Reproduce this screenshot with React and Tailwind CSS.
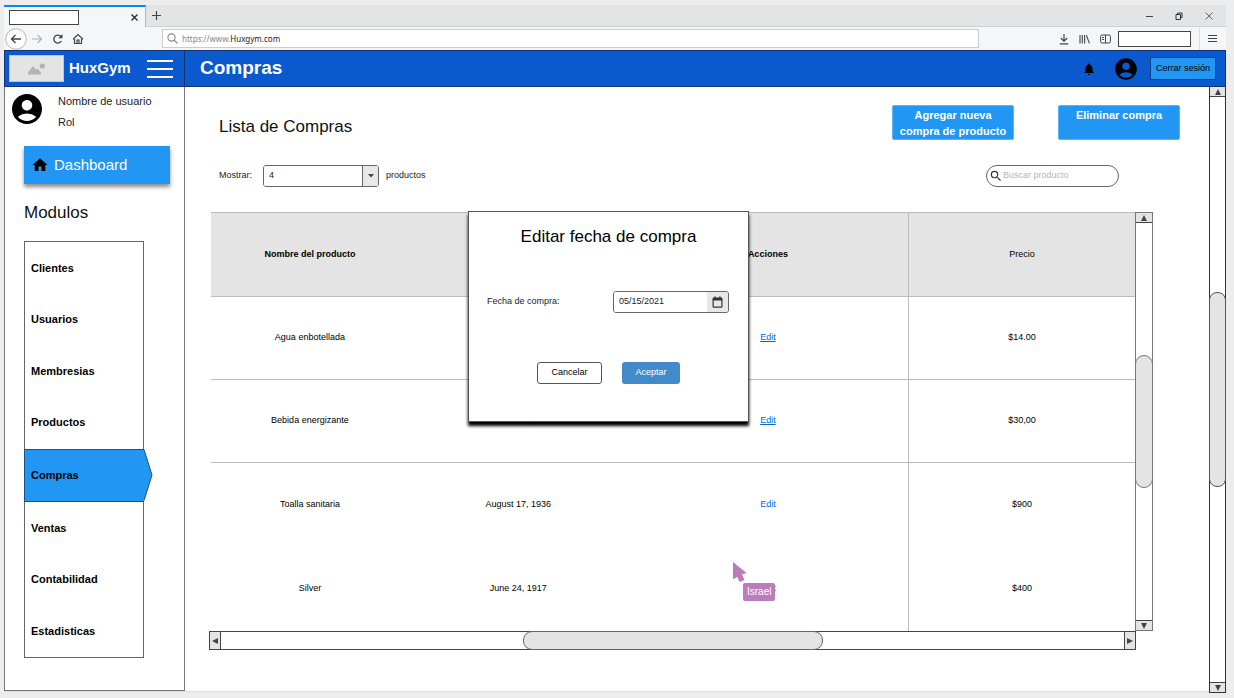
import React from "react";
import { MdAccountCircle, MdNotifications, MdHome, MdSearch } from "react-icons/md";

const modules = ["Clientes", "Usuarios", "Membresias", "Productos", "Compras", "Ventas", "Contabilidad", "Estadisticas"];

const rows = [
  { name: "Agua enbotellada", date: "March 1, 1941", price: "$14.00", line: true, underline: true },
  { name: "Bebida energizante", date: "December 5, 1935", price: "$30,00", line: true, underline: true },
  { name: "Toalla sanitaria", date: "August 17, 1936", price: "$900", line: false, underline: false },
  { name: "Silver", date: "June 24, 1917", price: "$400", line: false, underline: false },
];

function Triangle({ d }) {
  return (
    <svg width="8" height="8" viewBox="0 0 8 8" fill="#444" aria-hidden="true">
      <path d={d} />
    </svg>
  );
}

const UP = "M4 1 L7 7 H1 Z";
const DOWN = "M1 1 H7 L4 7 Z";
const LEFT = "M1 4 L7 1 V7 Z";
const RIGHT = "M1 1 L7 4 L1 7 Z";

function ScrollButton({ label, d, className }) {
  return (
    <button type="button" aria-label={label} className={"flex shrink-0 items-center justify-center border-[#444] bg-[#e4e4e4] " + className}>
      <Triangle d={d} />
    </button>
  );
}

function BrowserChrome() {
  return (
    <div className="shrink-0">
      <div className="flex h-[22px] bg-[#e3e4e6]">
        <div className="flex w-[142px] items-center border-t-2 border-r border-t-[#0a84ff] border-r-[#b5b5b5] bg-[#f5f6f7] pr-1.5 pl-[5px]">
          <input aria-label="Título de la pestaña" className="h-[15px] w-[70px] border border-[#444] bg-white" />
          <button type="button" aria-label="Cerrar pestaña" className="ml-auto">
            <svg width="9" height="9" viewBox="0 0 9 9" stroke="#222" strokeWidth="1.2"><path d="M1.5 1.5 L7.5 7.5 M7.5 1.5 L1.5 7.5" /></svg>
          </button>
        </div>
        <div className="flex flex-1 items-center border-b border-[#d0d0d0]">
          <button type="button" aria-label="Nueva pestaña" className="ml-1.5">
            <svg width="9" height="9" viewBox="0 0 9 9" stroke="#444" strokeWidth="1.2"><path d="M4.5 0 V9 M0 4.5 H9" /></svg>
          </button>
          <div className="ml-auto flex items-center gap-[22px] pr-[13px]">
            <button type="button" aria-label="Minimizar"><svg width="7" height="8" viewBox="0 0 7 8" stroke="#444"><path d="M0 4.5 H7" /></svg></button>
            <button type="button" aria-label="Restaurar"><svg width="8" height="8" viewBox="0 0 8 8" fill="none" stroke="#333"><path d="M1 2.5 H5.5 V7.5 H1 Z M2.5 2.5 V1 H7 V5.5 H5.5" /></svg></button>
            <button type="button" aria-label="Cerrar"><svg width="8" height="8" viewBox="0 0 8 8" stroke="#555" strokeWidth=".9"><path d="M.5 .5 L7.5 7.5 M7.5 .5 L.5 7.5" /></svg></button>
          </div>
        </div>
      </div>
      <div className="flex h-[23px] items-center bg-[#f5f6f7]">
        <button type="button" aria-label="Atrás" className="ml-px">
          <svg width="22" height="22" viewBox="0 0 22 22" fill="none">
            <circle cx="11" cy="11" r="10.3" fill="#fdfdfd" stroke="#b8b8b8" />
            <path d="M16 11 H6.5 M10.5 7 L6.5 11 L10.5 15" stroke="#444" strokeWidth="1.3" />
          </svg>
        </button>
        <button type="button" aria-label="Adelante" className="ml-1">
          <svg width="12" height="10" viewBox="0 0 12 10" fill="none" stroke="#b0b0b0" strokeWidth="1.2"><path d="M1 5 H10.5 M6.5 1 L10.5 5 L6.5 9" /></svg>
        </button>
        <button type="button" aria-label="Recargar" className="ml-[9px]">
          <svg width="12" height="12" viewBox="0 0 12 12" fill="none" stroke="#444" strokeWidth="1.3"><path d="M9.3 8 A4 4 0 1 1 9 3.6" /><path d="M10.5 1 V5.2 H6.3 Z" fill="#444" stroke="none" /></svg>
        </button>
        <button type="button" aria-label="Inicio" className="ml-2">
          <svg width="12" height="12" viewBox="0 0 12 12" fill="none" stroke="#444" strokeWidth="1.2"><path d="M1 6.3 L6 1.5 L11 6.3 M2.5 6 V10.5 H9.5 V6 M5 10.5 V7 H7 V10.5" /></svg>
        </button>
        <div className="ml-[78px] flex h-[19px] min-w-0 flex-1 items-center gap-1 border border-[#ccc] bg-white pl-1">
          <svg width="11" height="11" viewBox="0 0 11 11" fill="none" stroke="#888" strokeWidth="1.1"><circle cx="4.5" cy="4.5" r="3.6" /><path d="M7.2 7.2 L10.5 10.5" /></svg>
          <span className="font-['Noto_Sans',sans-serif] text-[8px] text-[#888]">https://www.<span className="text-[#222]">Huxgym.com</span></span>
        </div>
        <div className="ml-20 flex items-center">
          <button type="button" aria-label="Descargas"><svg width="10" height="12" viewBox="0 0 10 12" fill="none" stroke="#444" strokeWidth="1.2"><path d="M5 1 V8 M1.8 5 L5 8.2 L8.2 5 M.8 10.8 H9.2" /></svg></button>
          <button type="button" aria-label="Biblioteca" className="ml-2.5"><svg width="11" height="10" viewBox="0 0 11 10" fill="none" stroke="#555" strokeWidth="1.2"><path d="M1 1 V9.5 M3.3 1 V9.5 M5.6 1 V9.5 M7.4 1.2 L10.4 9.4" /></svg></button>
          <button type="button" aria-label="Barra lateral" className="ml-2.5"><svg width="11" height="10" viewBox="0 0 11 10" fill="none" stroke="#444"><rect x=".6" y="1" width="9.8" height="8" rx="1.5" /><path d="M5.5 1 V9 M2 3.5 H4 M2 5.5 H4" /></svg></button>
          <input aria-label="Búsqueda rápida" className="ml-[7px] h-4 w-[73px] border border-[#444] bg-white" />
          <span className="ml-2 h-[22px] w-px bg-[#ddd]" />
          <button type="button" aria-label="Menú del navegador" className="mr-[9px] ml-2"><svg width="9" height="9" viewBox="0 0 9 9" stroke="#444"><path d="M0 1.5 H9 M0 4.5 H9 M0 7.5 H9" /></svg></button>
        </div>
      </div>
    </div>
  );
}

function Header() {
  return (
    <header className="flex h-[37px] shrink-0 border border-[#15346f] bg-[#0b59cf] text-white">
      <div className="flex w-[180px] shrink-0 items-center border-r border-[#15346f] pl-1">
        <div className="flex h-[27px] w-[55px] items-center justify-center border border-[#b9c7e0] bg-[#e4e4e4]">
          <svg width="18" height="12" viewBox="0 0 18 12" fill="#b3b3b3" aria-hidden="true"><path d="M0 11.5 V9.5 L5 3 L8 6.5 L9.5 5.5 L13 9.5 V11.5 Z" /><circle cx="14.3" cy="3" r="2.6" /></svg>
        </div>
        <span className="ml-[5px] text-[15px] font-bold">HuxGym</span>
        <button type="button" aria-label="Menú" className="ml-4">
          <svg width="26" height="20" viewBox="0 0 26 20" stroke="#fff" strokeWidth="2"><path d="M0 2 H26 M0 10 H26 M0 18 H26" /></svg>
        </button>
      </div>
      <h1 className="pt-[7px] pl-[15px] text-[19px] leading-5 font-bold">Compras</h1>
      <div className="ml-auto flex items-center pr-[9px]">
        <button type="button" aria-label="Notificaciones" className="text-black"><MdNotifications size={14} /></button>
        <button type="button" aria-label="Cuenta" className="ml-[17px] text-black"><MdAccountCircle size={26} /></button>
        <button type="button" className="ml-[11px] h-[23px] w-[66px] border border-[#123f80] bg-[#2196f3] text-[9px] whitespace-nowrap text-black">Cerrar sesión</button>
      </div>
    </header>
  );
}

function Sidebar() {
  return (
    <aside className="w-[181px] shrink-0 border-x border-b border-[#777] bg-white">
      <div className="flex pt-1 pl-1">
        <MdAccountCircle size={36} className="shrink-0" />
        <div className="ml-[13px] text-[11px] leading-[21px] text-[#222]">
          <p>Nombre de usuario</p>
          <p>Rol</p>
        </div>
      </div>
      <a href="#dashboard" className="mt-[13px] mr-3.5 ml-[19px] flex h-[38px] items-center bg-[#2196f3] pl-[7px] text-[15px] text-white shadow-[0_3px_4px_rgba(0,0,0,0.45)]">
        <MdHome size={18} className="text-black" />
        <span className="ml-[5px]">Dashboard</span>
      </a>
      <h2 className="mt-[17px] ml-[19px] text-[17px] leading-6 text-[#111]">Modulos</h2>
      <nav className="mt-4 mr-10 ml-[19px] flex h-[417px] flex-col border border-[#666]">
        {modules.map((m) =>
          m === "Compras" ? (
            <a key={m} href="#compras" aria-current="page" className="relative -mx-px flex flex-1 items-center border border-r-0 border-[#1c5280] bg-[#2196f3] pl-1.5 text-[11px] font-bold text-black">
              {m}
              <svg className="absolute -top-px left-full" width="9" height="52" viewBox="0 0 9 52" aria-hidden="true">
                <path d="M0 .5 L8 26 L0 51.5" fill="#2196f3" stroke="#1c5280" />
              </svg>
            </a>
          ) : (
            <a key={m} href={"#" + m.toLowerCase()} className="flex flex-1 items-center pl-1.5 text-[11px] font-bold text-black">{m}</a>
          )
        )}
      </nav>
    </aside>
  );
}

function EditDialog() {
  return (
    <div role="dialog" aria-labelledby="dialog-title" className="absolute -top-px left-[257px] w-[281px] border border-[#555] bg-white px-[18px] pt-[13px] pb-[37px] shadow-[0_4px_3px_#000]">
      <h2 id="dialog-title" className="text-center text-[17px] leading-6 text-black">Editar fecha de compra</h2>
      <div className="mt-[42px] flex items-center justify-between pr-px">
        <label htmlFor="fecha" className="text-[9px] text-[#222]">Fecha de compra:</label>
        <div className="flex h-[22px] w-[116px] overflow-hidden rounded-[3px] border border-[#666]">
          <input id="fecha" defaultValue="05/15/2021" className="min-w-0 flex-1 bg-white pl-[5px] text-[9px] text-[#222]" />
          <button type="button" aria-label="Abrir calendario" className="flex w-[21px] items-center justify-center bg-[#e8e8e8]">
            <svg width="11" height="12" viewBox="0 0 11 12" aria-hidden="true">
              <rect x="1.1" y="2" width="8.8" height="9.2" rx=".8" fill="none" stroke="#333" strokeWidth="1.2" />
              <path d="M1 2 H10 V4.6 H1 Z M2.4 .4 H3.8 V2.4 H2.4 Z M7.2 .4 H8.6 V2.4 H7.2 Z" fill="#333" />
            </svg>
          </button>
        </div>
      </div>
      <div className="mt-[49px] flex justify-center gap-5">
        <button type="button" className="h-[22px] w-[65px] rounded-[3px] border border-[#555] bg-white text-[9px] text-black">Cancelar</button>
        <button type="button" className="h-[22px] w-[58px] rounded-[3px] bg-[#428bca] text-[9px] text-white">Aceptar</button>
      </div>
    </div>
  );
}

function PurchasesTable() {
  return (
    <div className="relative flex">
      <table className="min-w-0 flex-1 table-fixed border-separate border-spacing-0 text-center text-[9px] text-black">
        <colgroup>
          <col className="w-[198px]" />
          <col className="w-[219px]" />
          <col className="w-[282px]" />
          <col className="w-[226px]" />
        </colgroup>
        <thead>
          <tr className="h-[85px] bg-[#e4e4e4]">
            <th className="border-y border-[#bbb] font-bold">Nombre del producto</th>
            <th className="border-y border-[#bbb] font-bold">Fecha</th>
            <th className="border-y border-r border-[#bbb] font-bold">Acciones</th>
            <th className="border-y border-[#bbb] font-normal">Precio</th>
          </tr>
        </thead>
        <tbody>
          {rows.map((r) => (
            <tr key={r.name} className={r.line ? "h-[83px] *:border-b *:border-[#bbb]" : "h-[84px]"}>
              <td>{r.name}</td>
              <td>{r.date}</td>
              <td className="border-r border-[#bbb]"><a href="#edit" className={r.underline ? "text-[#0069d9] underline" : "text-[#0069d9]"}>Edit</a></td>
              <td>{r.price}</td>
            </tr>
          ))}
        </tbody>
      </table>
      <div className="flex w-[18px] shrink-0 flex-col border border-[#777]">
        <ScrollButton label="Subir tabla" d={UP} className="h-2.5 border-b" />
        <div className="flex flex-1 flex-col pt-[132px]">
          <div className="-mx-px h-[133px] rounded-[9px] border border-[#777] bg-[#e4e4e4]" />
        </div>
        <ScrollButton label="Bajar tabla" d={DOWN} className="h-2.5 border-t" />
      </div>
      <EditDialog />
      <div className="absolute top-[349px] left-[521px]">
        <svg width="16" height="22" viewBox="0 0 16 22" fill="#bb7cbb" aria-hidden="true"><path d="M1 1 L14.5 12 L10 13.5 L12.5 19 L7.5 21 L5.5 16 L1 18 Z" /></svg>
        <span className="ml-[11px] block rounded-xs bg-[#bb7cbb] px-1 text-[10px] leading-[18px] text-white">Israel</span>
      </div>
    </div>
  );
}

export default function App() {
  return (
    <div className="flex min-h-screen flex-col bg-[#ededed] pt-[5px] pr-2 pb-1.5 pl-1 font-['Liberation_Sans',Arial,sans-serif]">
      <BrowserChrome />
      <Header />
      <div className="flex flex-1">
        <div className="flex min-w-0 flex-1 border-b border-[#ddd] bg-white">
          <Sidebar />
          <main className="min-w-0 flex-1 pt-[18px] pr-[56px] pl-[26px]">
            <div className="flex items-start pl-2">
              <h2 className="mt-2.5 text-[17px] leading-6 text-[#111]">Lista de Compras</h2>
              <div className="-mr-[27px] ml-auto flex gap-[44px]">
                <button type="button" className="h-[35px] w-[122px] rounded-xs border border-[#5fb2f5] bg-[#2196f3] px-1 text-[11px] leading-4 font-bold text-white">Agregar nueva compra de producto</button>
                <button type="button" className="h-[35px] w-[122px] rounded-xs border border-[#5fb2f5] bg-[#2196f3] pb-4 text-[11px] leading-4 font-bold text-white">Eliminar compra</button>
              </div>
            </div>
            <div className="mt-[25px] flex items-center pr-[34px] pl-2 text-[9px] text-[#222]">
              <label htmlFor="mostrar">Mostrar:</label>
              <div className="relative ml-[11px] flex h-[22px] w-[116px] overflow-hidden rounded-[3px] border border-[#666]">
                <select id="mostrar" className="w-full appearance-none bg-white pl-[5px] text-[9px]"><option>4</option></select>
                <span className="pointer-events-none absolute inset-y-0 right-0 flex w-4 items-center justify-center border-l border-[#666] bg-[#e8e8e8]">
                  <svg width="6" height="4" viewBox="0 0 6 4" fill="#444"><path d="M0 0 H6 L3 3.5 Z" /></svg>
                </span>
              </div>
              <span className="ml-[7px]">productos</span>
              <div className="ml-auto flex h-[22px] w-[133px] items-center rounded-full border border-[#666] bg-white pl-0.5">
                <MdSearch size={14} className="shrink-0 text-[#333]" />
                <input aria-label="Buscar producto" placeholder="Buscar producto" className="min-w-0 flex-1 text-[9px] placeholder:text-[#b5b5b5]" />
              </div>
            </div>
            <div className="mt-[25px]">
              <PurchasesTable />
            </div>
            <div className="mr-[17px] -ml-0.5 flex h-[19px] border border-[#444]">
              <ScrollButton label="Desplazar a la izquierda" d={LEFT} className="w-[11px] border-r" />
              <div className="flex flex-1 pl-[302px]">
                <div className="-my-px w-[300px] rounded-[9px] border border-[#666] bg-[#e4e4e4]" />
              </div>
              <ScrollButton label="Desplazar a la derecha" d={RIGHT} className="w-[11px] border-l" />
            </div>
          </main>
        </div>
        <div className="-mb-px flex w-[17px] shrink-0 flex-col border border-t-0 border-[#333] bg-white">
          <ScrollButton label="Subir página" d={UP} className="h-2.5 border-b" />
          <div className="flex flex-1 flex-col pt-[195px]">
            <div className="-mx-px h-[195px] rounded-[8px] border border-[#555] bg-[#e4e4e4]" />
          </div>
          <ScrollButton label="Bajar página" d={DOWN} className="h-2.5 border-t" />
        </div>
      </div>
    </div>
  );
}
